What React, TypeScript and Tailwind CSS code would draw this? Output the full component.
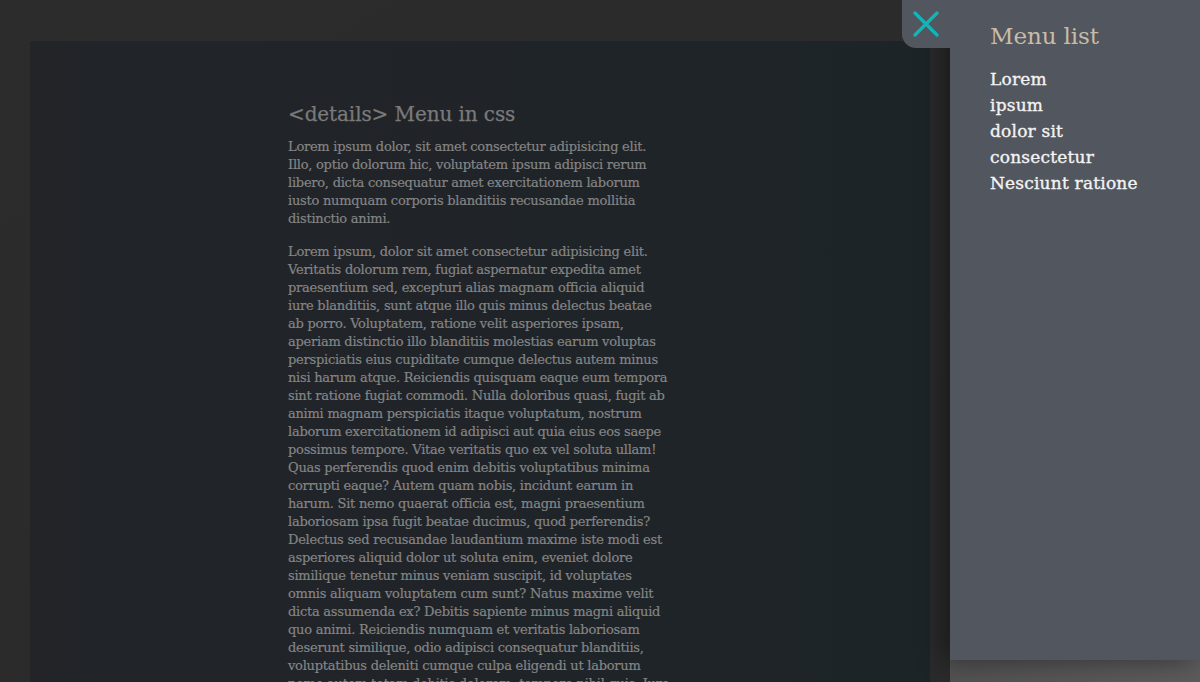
import React from "react";

const p1 = [
  "Lorem ipsum dolor, sit amet consectetur adipisicing elit.",
  "Illo, optio dolorum hic, voluptatem ipsum adipisci rerum",
  "libero, dicta consequatur amet exercitationem laborum",
  "iusto numquam corporis blanditiis recusandae mollitia",
  "distinctio animi.",
];

const p2 = [
  "Lorem ipsum, dolor sit amet consectetur adipisicing elit.",
  "Veritatis dolorum rem, fugiat aspernatur expedita amet",
  "praesentium sed, excepturi alias magnam officia aliquid",
  "iure blanditiis, sunt atque illo quis minus delectus beatae",
  "ab porro. Voluptatem, ratione velit asperiores ipsam,",
  "aperiam distinctio illo blanditiis molestias earum voluptas",
  "perspiciatis eius cupiditate cumque delectus autem minus",
  "nisi harum atque. Reiciendis quisquam eaque eum tempora",
  "sint ratione fugiat commodi. Nulla doloribus quasi, fugit ab",
  "animi magnam perspiciatis itaque voluptatum, nostrum",
  "laborum exercitationem id adipisci aut quia eius eos saepe",
  "possimus tempore. Vitae veritatis quo ex vel soluta ullam!",
  "Quas perferendis quod enim debitis voluptatibus minima",
  "corrupti eaque? Autem quam nobis, incidunt earum in",
  "harum. Sit nemo quaerat officia est, magni praesentium",
  "laboriosam ipsa fugit beatae ducimus, quod perferendis?",
  "Delectus sed recusandae laudantium maxime iste modi est",
  "asperiores aliquid dolor ut soluta enim, eveniet dolore",
  "similique tenetur minus veniam suscipit, id voluptates",
  "omnis aliquam voluptatem cum sunt? Natus maxime velit",
  "dicta assumenda ex? Debitis sapiente minus magni aliquid",
  "quo animi. Reiciendis numquam et veritatis laboriosam",
  "deserunt similique, odio adipisci consequatur blanditiis,",
  "voluptatibus deleniti cumque culpa eligendi ut laborum",
  "nemo autem totam debitis dolorem, tempore nihil quis. Iure",
];

const items = ["Lorem", "ipsum", "dolor sit", "consectetur", "Nesciunt ratione"];

export default function App() {
  return (
    <div className="relative w-[1200px] h-[682px] overflow-hidden bg-gradient-to-br from-[#2c2c2c] to-[#2a2a2a] font-['DejaVu_Serif','Liberation_Serif',serif]">
      <main className="ml-[30px] mt-[41px] w-[900px] h-[700px] bg-gradient-to-r from-[#222428] via-[#202428] to-[#1d2428] pt-[59px] pl-[258px]">
        <h1 className="text-[20px] leading-[28px] text-[#7a7a7a] mb-[10px] tracking-[-0.1px] [-webkit-text-stroke:0.25px_#7a7a7a]">
          &lt;details&gt; Menu in css
        </h1>
        <p className="text-[13px] leading-[18px] text-[#858585] mb-[15px] tracking-[-0.25px] [-webkit-text-stroke:0.2px_#858585]">
          {p1.map((l, i) => (
            <span key={i} className="block whitespace-nowrap">
              {l}
            </span>
          ))}
        </p>
        <p className="text-[13px] leading-[18px] text-[#858585] tracking-[-0.25px] [-webkit-text-stroke:0.2px_#858585]">
          {p2.map((l, i) => (
            <span key={i} className="block whitespace-nowrap">
              {l}
            </span>
          ))}
        </p>
      </main>

      <div className="absolute left-[950px] top-[660px] w-[250px] h-[22px] bg-gradient-to-r from-[#525252] to-[#5c5c5c]" />

      <aside className="absolute top-0 right-0 w-[250px] h-[660px] bg-[#52565e] shadow-[-6px_0_26px_rgba(0,0,0,0.45)] pl-[40px] pt-[22px]">
        <button className="absolute top-0 -left-[48px] w-[48px] h-[48px] bg-[#52565e] rounded-bl-[14px] flex items-center justify-center">
          <svg width="28" height="28" viewBox="0 0 28 28" fill="none">
            <path
              d="M3 3 L25 25 M25 3 L3 25"
              stroke="#12b4b8"
              strokeWidth="3.4"
              strokeLinecap="round"
            />
          </svg>
        </button>
        <h2 className="text-[23px] leading-[28px] text-[#c8bca8] mb-[16px] tracking-[-0.1px]">Menu list</h2>
        <ul>
          {items.map((it) => (
            <li
              key={it}
              className="text-[17px] leading-[26px] text-[#f3f3f3] tracking-[0.2px] [-webkit-text-stroke:0.35px_#f3f3f3]"
            >
              {it}
            </li>
          ))}
        </ul>
      </aside>
    </div>
  );
}
